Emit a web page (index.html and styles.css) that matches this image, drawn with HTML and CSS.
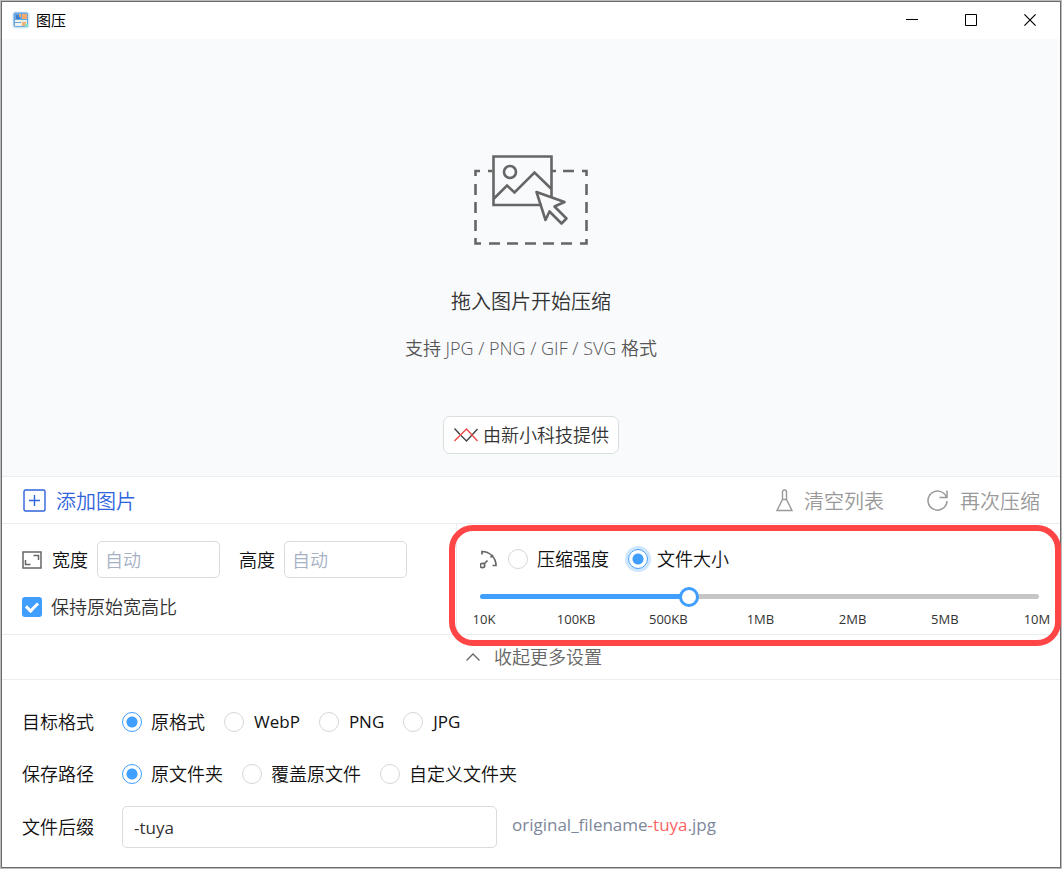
FILE: index.html
```html
<!DOCTYPE html>
<html lang="zh-CN">
<head>
<meta charset="utf-8">
<meta name="viewport" content="width=device-width, initial-scale=1">
<title>图压</title>
<link rel="stylesheet" href="styles.css">
</head>
<body>
<div class="window">
  <header class="titlebar">
    <svg class="app-icon" width="18" height="18" viewBox="0 0 18 18" aria-hidden="true">
      <rect x="0.5" y="0.5" width="17" height="17" rx="3" fill="#d3e8f4"/>
      <rect x="1.5" y="1.5" width="14.500" height="14.500" rx="2" fill="#6aa6e2"/>
      <rect x="4" y="4" width="4" height="4" fill="#3f7fce"/>
      <path d="M7 3h2v3H7z" fill="#f0a868"/>
      <path d="M10 3h5v5h-5z" fill="#f2ab6d"/>
      <path d="M3 9h6v2H3zM3 12h6v3H3z" fill="#f3f3ee"/>
      <path d="M9 9h6v6H9z" fill="#e4eedc"/>
      <path d="M10 11h4v4h-4z" fill="#efb27c"/>
      <path d="M13 13h3v3h-3z" fill="#84dfc2"/>
    </svg>
    <h1 class="app-name">图压</h1>
    <div class="window-controls">
      <button class="window-button" aria-label="最小化"><svg width="12" height="12" viewBox="0 0 12 12" stroke="#000"><path d="M0 5.5h12"/></svg></button>
      <button class="window-button" aria-label="最大化"><svg width="12" height="12" viewBox="0 0 12 12" fill="none" stroke="#000"><path d="M.5.5h11v11H.5z"/></svg></button>
      <button class="window-button" aria-label="关闭"><svg width="12" height="12" viewBox="0 0 12 12" stroke="#000" stroke-width="1.2"><path d="M.4.4l11.2 11.2M11.6.4L.4 11.6"/></svg></button>
    </div>
  </header>

  <main class="dropzone">
    <svg class="drop-icon" width="114" height="90" viewBox="0 0 114 90" fill="none" stroke="#666" stroke-width="2.6" aria-hidden="true">
      <path d="M18.500 16H14M6 16H1.500V21M1.500 29V40M1.500 47V58M1.500 65V76M1.500 83V88.500H7M15 88.500H26M33 88.500H44M51 88.500H62M69 88.500H80M87 88.500H98M106 88.500H112.500V84M112.500 76V65M112.500 58V47M112.500 40V29M112.500 21V16H108M100 16H89M82 16H78"/>
      <path d="M77.500 42V1.500H19.500V50H68M19.500 44L33 30.500L40.500 37.500L60.500 17.500L77.500 34"/>
      <circle cx="36" cy="17" r="6"/>
      <path d="M62.500 37L90.500 47L80.500 51.500L92.500 63.500L87.500 68.500L75.500 56.500L71.500 65Z" stroke-linejoin="round"/>
    </svg>
    <h2 class="drop-title">拖入图片开始压缩</h2>
    <p class="drop-formats">支持 JPG / PNG / GIF / SVG 格式</p>
    <a class="provider" href="#">
      <svg width="24" height="14" viewBox="0 0 24 14" fill="none" stroke-width="1.4" aria-hidden="true">
        <path d="M.5.500L6 6.500M7 7.500L12.500 13L23.500 1" stroke="#444"/>
        <path d="M.5 13L12.500 1L23.500 13" stroke="#ef4848"/>
      </svg>
      由新小科技提供
    </a>
  </main>

  <nav class="toolbar">
    <button class="tool tool-add">
      <svg width="23" height="23" viewBox="0 0 23 23" fill="none" stroke="currentColor" stroke-width="1.4" aria-hidden="true"><rect x="1" y="1" width="21" height="21" rx="1.500"/><path d="M11.500 6v11M6 11.500h11"/></svg>
      <span class="tool-text">添加图片</span>
    </button>
    <button class="tool tool-clear">
      <svg width="17" height="23" viewBox="0 0 17 23" fill="none" stroke="currentColor" stroke-width="1.400" aria-hidden="true"><path d="M6.500 11V3a2 2 0 0 1 4 0v8M6.500 10.500h4L16 21.500H1z"/></svg>
      <span class="tool-text">清空列表</span>
    </button>
    <button class="tool">
      <svg width="23" height="23" viewBox="0 0 23 23" fill="none" stroke="currentColor" stroke-width="1.500" aria-hidden="true"><path d="M20.500 8.500A9.500 9.500 0 1 0 21 12M21 1.500v7h-7.500"/></svg>
      <span class="tool-text">再次压缩</span>
    </button>
  </nav>

  <section class="settings">
    <div class="size-pane">
      <div class="size-row">
        <svg width="20" height="18" viewBox="0 0 20 18" fill="none" stroke="#666" stroke-width="1.500" aria-hidden="true"><path d="M1 1h18v16H1zM11.500 4.500h5v4.500M3.500 9v4.500h5"/></svg>
        <label class="size-label" for="width">宽度</label>
        <input class="field size-field" id="width" type="text" placeholder="自动">
        <label class="size-label size-label-second" for="height">高度</label>
        <input class="field size-field" id="height" type="text" placeholder="自动">
      </div>
      <label class="ratio"><input class="check" type="checkbox" checked>保持原始宽高比</label>
    </div>
    <div class="compress-pane">
      <div class="mode-row">
        <svg width="19" height="19" viewBox="1 0 19 19" fill="none" stroke="#666" stroke-width="1.700" aria-hidden="true"><path d="M3 4.500V1.500C10.500 1.500 17 7.500 17 15.500H13.500M11.500 7.500L14 5M5 14L8.500 10.500"/><circle cx="3.500" cy="15.500" r="2.200"/></svg>
        <label class="choice"><input class="radio" type="radio" name="mode">压缩强度</label>
        <label class="choice"><input class="radio radio-focus" type="radio" name="mode" checked>文件大小</label>
      </div>
      <input class="slider" type="range" min="0" max="100" value="37" aria-label="文件大小">
      <div class="scale">
        <span>10K</span><span>100KB</span><span>500KB</span><span>1MB</span><span>2MB</span><span>5MB</span><span>10M</span>
      </div>
    </div>
    <div class="highlight"></div>
  </section>

  <button class="collapse">
    <svg width="14" height="8" viewBox="0 0 14 8" fill="none" stroke="#666" stroke-width="1.300" aria-hidden="true"><path d="M.5 7.500L7 1l6.500 6.500"/></svg>
    收起更多设置
  </button>

  <section class="output">
    <div class="output-row" role="radiogroup" aria-labelledby="format-label">
      <span class="output-label" id="format-label">目标格式</span>
      <label class="choice"><input class="radio" type="radio" name="format" checked>原格式</label>
      <label class="choice choice-latin"><input class="radio" type="radio" name="format">WebP</label>
      <label class="choice choice-latin"><input class="radio" type="radio" name="format">PNG</label>
      <label class="choice choice-latin"><input class="radio" type="radio" name="format">JPG</label>
    </div>
    <div class="output-row" role="radiogroup" aria-labelledby="path-label">
      <span class="output-label" id="path-label">保存路径</span>
      <label class="choice"><input class="radio" type="radio" name="path" checked>原文件夹</label>
      <label class="choice"><input class="radio" type="radio" name="path">覆盖原文件</label>
      <label class="choice"><input class="radio" type="radio" name="path">自定义文件夹</label>
    </div>
    <div class="output-row output-row-suffix">
      <label class="output-label" for="suffix">文件后缀</label>
      <input class="field suffix-field" id="suffix" type="text" value="-tuya">
      <span class="filename">original_filename<span class="filename-suffix">-tuya</span>.jpg</span>
    </div>
  </section>
</div>
</body>
</html>
```

FILE: styles.css
```css
* {
  box-sizing: border-box;
}

body {
  display: flow-root;
  margin: 0;
  background: #bbb;
  color: #111;
  font: 350 18px/24px "Open Sans", "Noto Sans CJK SC", sans-serif;
}

button,
input {
  font: inherit;
  color: inherit;
}

button {
  padding: 0;
  border: 0;
  background: none;
}

svg {
  display: block;
  flex: none;
}

.window {
  display: flex;
  flex-direction: column;
  min-height: calc(100vh - 2px);
  margin: 1px;
  border: 1px solid #6b6b6b;
  background: #fff;
}

.titlebar {
  display: flex;
  align-items: center;
  height: 37px;
  padding: 0 1px 2px 10px;
}

.app-name {
  margin: 0 auto 0 6px;
  color: #000;
  font-size: 15px;
  font-weight: 400;
}

.window-controls {
  display: flex;
}

.window-button {
  display: grid;
  place-items: center;
  width: 59px;
  height: 35px;
}

.dropzone {
  display: flex;
  flex: 1;
  flex-direction: column;
  align-items: center;
  padding: 116px 20px 22px;
  background: #f9fafc;
}

.drop-title {
  margin: 43px 0 0;
  color: #333;
  font-size: 20px;
  font-weight: inherit;
  line-height: 28px;
}

.drop-formats {
  margin: 20px 0 0;
  color: #555;
}

.provider {
  display: flex;
  align-items: center;
  gap: 5px;
  height: 38px;
  margin-top: 56px;
  padding: 0 9px 0 10px;
  border: 1px solid #d9dfdf;
  border-radius: 7px;
  background: #fff;
  color: #333;
  text-decoration: none;
}

.toolbar {
  display: flex;
  align-items: center;
  gap: 42px;
  height: 48px;
  padding: 1px 20px 0 21px;
  border: solid #ebeef0;
  border-width: 1px 0;
}

.tool {
  display: flex;
  align-items: center;
  gap: 11px;
  color: #999;
  font-size: 20px;
}

.tool-text {
  padding-top: 3px;
}

.tool-add {
  margin-right: auto;
  gap: 10px;
  color: #2f63dc;
}

.settings {
  position: relative;
  display: flex;
  height: 111px;
  border-bottom: 1px solid #ebeef0;
}

.size-pane {
  width: 43%;
  padding: 17px 20px 0;
  border-right: 1px solid #ebeef0;
}

.size-row {
  display: flex;
  align-items: center;
}

.size-label {
  margin: 0 9px 0 10px;
  white-space: nowrap;
}

.size-label-second {
  margin-left: 19px;
}

.field {
  min-width: 0;
  border: 1px solid #d9dcdf;
  border-radius: 5px;
  background: #fff;
  outline: 0;
}

.field::placeholder {
  color: #a6b1c4;
  opacity: 1;
}

.size-field {
  width: 123px;
  height: 37px;
  padding: 0 7px;
}

.ratio {
  display: flex;
  align-items: center;
  gap: 9px;
  width: max-content;
  margin-top: 17px;
  color: #333;
}

.check {
  width: 20px;
  height: 20px;
  margin: 0;
  appearance: none;
  border-radius: 3px;
  background: #409eff;
}

.check:checked::before {
  display: block;
  box-sizing: border-box;
  width: 8px;
  height: 12px;
  margin: 3px auto 0;
  border: solid #fff;
  border-width: 0 3px 3px 0;
  content: "";
  transform: rotate(45deg);
}

.compress-pane {
  flex: 1;
  padding: 23px 21px 0 23px;
}

.mode-row {
  display: flex;
  align-items: center;
  gap: 9px;
}

.choice {
  display: flex;
  align-items: center;
  gap: 9px;
  margin-right: 19px;
  white-space: nowrap;
}

.choice-latin {
  gap: 10px;
  font-size: 17px;
  font-weight: 400;
}

.mode-row .choice {
  margin-right: 10px;
}

.radio {
  flex: none;
  width: 20px;
  height: 20px;
  margin: 0;
  appearance: none;
  border: 1px solid #d6d6d6;
  border-radius: 50%;
  background: #fff;
}

.radio:checked {
  border-color: #409eff;
  background: radial-gradient(circle, #409eff 5px, #fff 6px);
}

.radio-focus {
  box-shadow: 0 0 0 3px #cfe6ff;
}

.slider {
  display: block;
  width: 100%;
  height: 20px;
  margin: 15px 0 0;
  appearance: none;
  background: none;
}

.slider::-webkit-slider-runnable-track {
  height: 5px;
  border-radius: 3px;
  background: linear-gradient(to right, #409eff 37%, #c6c6c6 37%);
}

.slider::-webkit-slider-thumb {
  width: 20px;
  height: 20px;
  margin-top: -7px;
  appearance: none;
  border: 3px solid #409eff;
  border-radius: 50%;
  background: #fff;
}

.scale {
  display: flex;
  justify-content: space-between;
  margin: 4px -12px 0 -10px;
  color: #333;
  font-size: 13px;
  font-weight: 400;
  line-height: 18px;
}

.scale span {
  display: flex;
  justify-content: center;
  width: 28px;
  white-space: nowrap;
}

.highlight {
  position: absolute;
  inset: 1px -1px -12px 447px;
  border: 6px solid #ff4545;
  border-radius: 24px;
  pointer-events: none;
}

.collapse {
  display: flex;
  align-items: center;
  justify-content: center;
  gap: 14px;
  height: 45px;
  padding-left: 6px;
  border-bottom: 1px solid #ebeef0;
  color: #666;
}

.output {
  display: flex;
  flex-direction: column;
  padding: 16px 20px 13px;
}

.output-row {
  display: flex;
  align-items: center;
  height: 52px;
}

.output-row-suffix {
  height: 54px;
}

.output-label {
  flex: none;
  width: 100px;
}

.suffix-field {
  width: 375px;
  height: 42px;
  padding: 0 11px;
  color: #333;
  font-size: 17px;
  font-weight: 400;
}

.filename {
  margin-left: 15px;
  padding-bottom: 4px;
  color: #7d879a;
  font-size: 17px;
  font-weight: 400;
}

.filename-suffix {
  color: #fa6464;
}
```
